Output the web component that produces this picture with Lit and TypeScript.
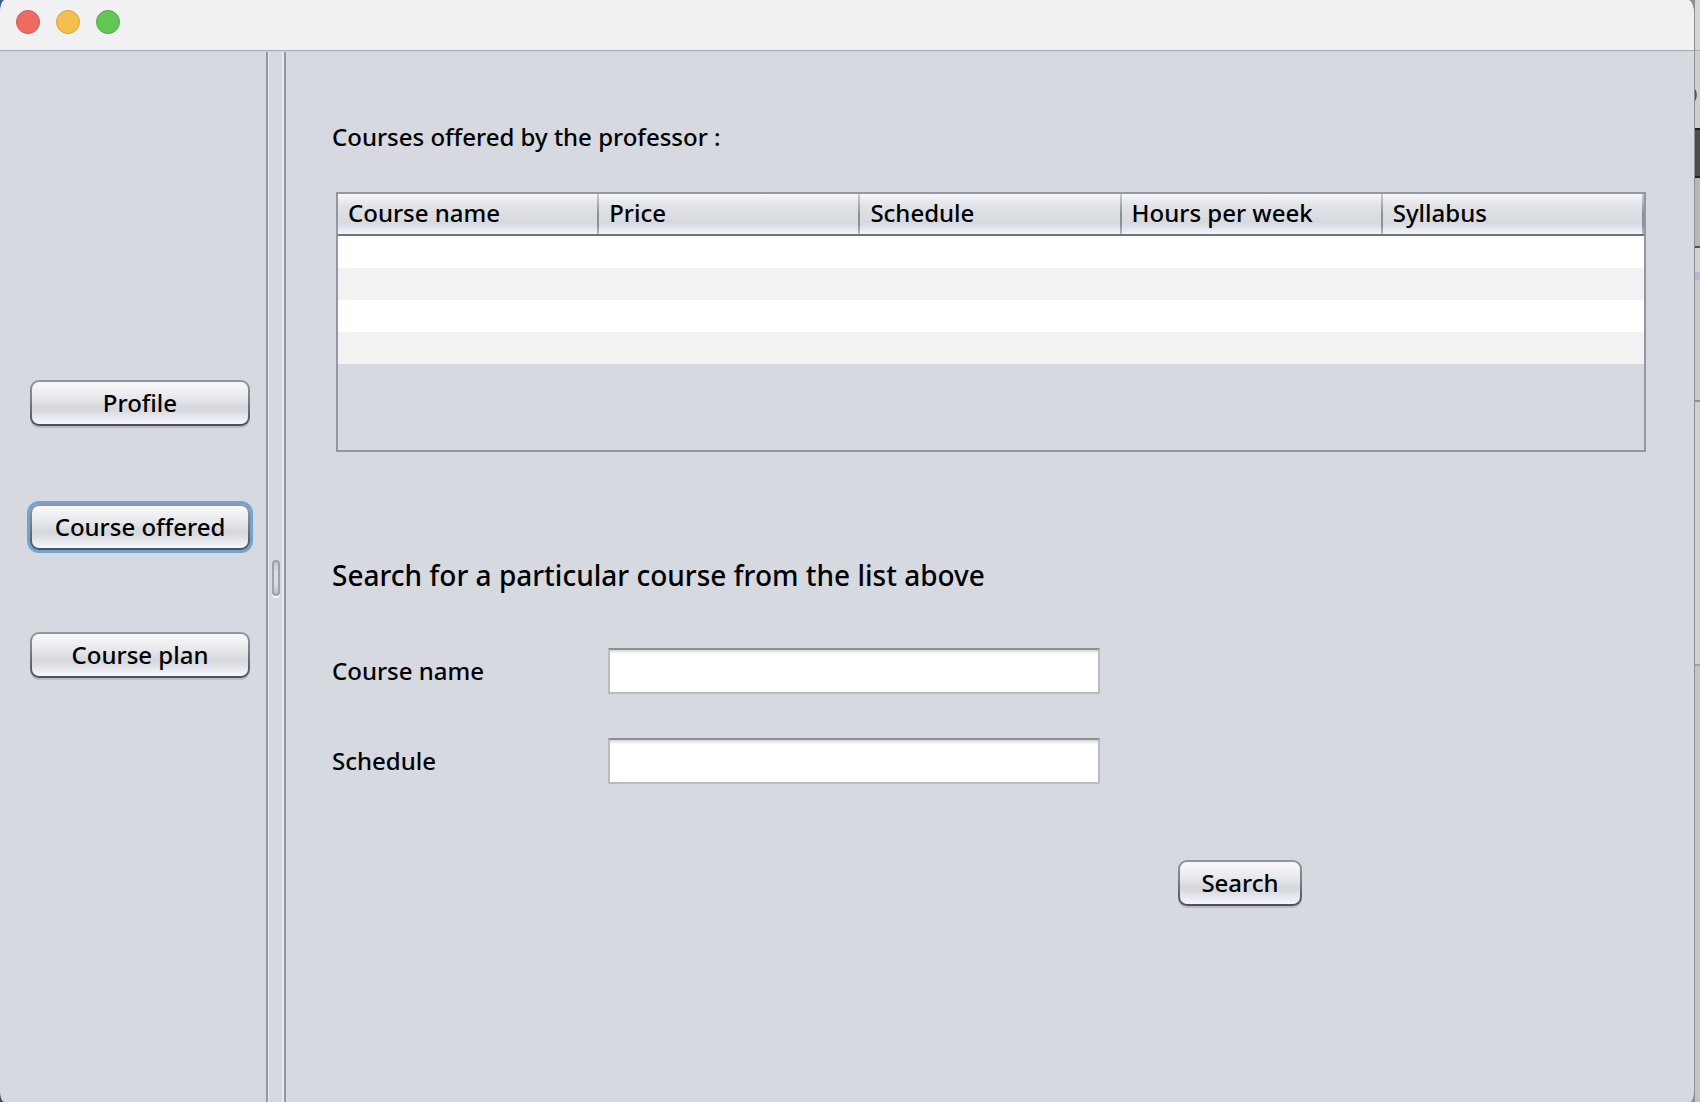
import { LitElement, html, css } from "lit";
import { customElement, state } from "lit/decorators.js";

const COLUMNS = ["Course name", "Price", "Schedule", "Hours per week", "Syllabus"];
const PAGES = ["Profile", "Course offered", "Course plan"];
const EMPTY_ROWS = [0, 1, 2, 3];

@customElement("app-root")
export class AppRoot extends LitElement {
  @state() private page = "Course offered";

  static styles = css`
    :host {
      display: block;
      font-family: "Noto Sans", "Lucida Grande", sans-serif;
      font-size: 24px;
      font-weight: 500;
      line-height: 32px;
      color: #000;
    }
    * {
      box-sizing: border-box;
    }
    .desktop {
      display: grid;
      grid-template-columns: minmax(0, 1fr) 6px;
      min-height: 100vh;
      background: linear-gradient(#3d5a8c 0 50%, #48494c 50%);
    }
    .window {
      display: flex;
      flex-direction: column;
      background: #d6d9df;
      overflow: hidden;
      border-radius: 5px 6px 4px 4px / 13px 14px 11px 11px;
    }
    .behind {
      margin-left: -6px;
      border-left: 6px solid #8f9092;
      z-index: -1;
      background:
        linear-gradient(90deg, #8f9092 1px, transparent 1px),
        radial-gradient(ellipse 3px 7px at 0 95px, #a02a5c 0 80%, transparent),
        linear-gradient(
          #d5d4d8 0 50px, #a9a9ab 50px 51px, #cfcecf 51px 128px,
          #202223 128px 130px, #4b4d4e 130px 176px, #202223 176px 178px,
          #b6b6b5 178px 246px, #505151 246px 248px, #d3d2d1 248px 272px,
          #b8b6d2 272px 280px, #cacac8 280px 400px, #929292 400px 402px,
          #d0d0ce 402px 664px, #a0a0a0 664px 666px, #c4c4c4 666px
        );
    }
    .desktop,
    .window {
      position: relative;
      z-index: 0;
    }
    .titlebar {
      display: flex;
      gap: 16px;
      height: 51px;
      padding: 10px 16px;
      background: #f1f0f3;
      border-bottom: 1px solid #a9abb1;
    }
    .light {
      width: 24px;
      height: 24px;
      padding: 0;
      border-radius: 50%;
      border: 1px solid;
    }
    .close {
      background: #ed6b60;
      border-color: #d4584e;
    }
    .minimise {
      background: #f5bf4f;
      border-color: #d8a13c;
    }
    .zoom {
      background: #62c655;
      border-color: #4fa83d;
    }
    .split {
      flex: 1;
      display: grid;
      grid-template-columns: 266px 20px minmax(0, 1fr);
      border-top: 1px solid #cdd0d6;
    }
    .nav {
      display: grid;
      grid-template-rows: 124px 128px 46px;
      align-items: start;
      padding: 328px 16px 0 30px;
    }
    .divider {
      display: flex;
      justify-content: center;
      border: solid #9297a1;
      border-width: 0 2px;
      box-shadow: inset 1px 0 #e8eaee, inset -2px 0 #e8eaee;
      padding-top: 508px;
    }
    .grip {
      width: 8px;
      height: 36px;
      border: 2px solid #9da2ad;
      border-radius: 4px;
      background: linear-gradient(#c2c6ce, #d9dce2 30%, #d9dce2 70%, #b9bdc6);
      box-shadow: 0 2px #f6f7f9;
    }
    .button {
      height: 46px;
      padding: 0 16px;
      font: inherit;
      color: inherit;
      border: 2px solid transparent;
      border-radius: 9px;
      background:
        linear-gradient(#f9f9fa, #e5e6ea 42%, #d6d9df 58%, #d8dae0 68%, #f6f8fd) padding-box,
        linear-gradient(#92979e, #7d8187 40%, #4c4f55) border-box;
      box-shadow: 0 2px #b9bcc2;
      outline: none;
    }
    .button.current {
      box-shadow: 0 0 0 3px #73a4d1;
    }
    .content {
      padding: 69px 48px 48px 46px;
    }
    .caption,
    .heading {
      margin: 0;
      font-weight: inherit;
      font-size: 24px;
      line-height: 32px;
    }
    .heading {
      font-size: 28px;
      line-height: 40px;
    }
    .viewport {
      min-height: 260px;
      margin: 39px 0 103px 4px;
      border: 2px solid #9297a1;
    }
    .table {
      width: 100%;
      table-layout: fixed;
      border-collapse: separate;
      border-spacing: 0;
    }
    .table th {
      height: 42px;
      padding: 0 10px 2px;
      text-align: left;
      font-weight: inherit;
      border-bottom: 2px solid #6f747f;
      background:
        linear-gradient(#c9cbd0, #8a8f98 50%, #8a8f98 75%, #b5b9c0) right / 2px 100% no-repeat padding-box,
        linear-gradient(#f5f6f9, #e1e3e6 30%, #d6d9df 70%, #d9dce2 76%, #f2f5fb);
    }
    .table td {
      height: 32px;
      padding: 0 10px;
      background: #fff;
    }
    .table tr:nth-child(even) td {
      background: #f2f2f2;
    }
    .form {
      display: grid;
      grid-template-columns: 276px minmax(0, 492px) 78px auto;
      justify-content: start;
      align-items: center;
      row-gap: 44px;
      margin-top: 53px;
    }
    .label {
      grid-column: 1;
    }
    .field {
      grid-column: 2;
      width: 100%;
      height: 46px;
      padding: 0 10px;
      font: inherit;
      color: inherit;
      border: 2px solid #bbbcbf;
      border-top-color: #8e8f92;
      border-radius: 0;
      background: linear-gradient(#d5d6d8, #fff 4px) #fff;
      outline: none;
    }
    .submit {
      grid-column: 4;
      grid-row: 3;
      width: 124px;
      margin-top: 32px;
    }
  `;

  render() {
    return html`
      <div class="desktop">
        <div class="window">
          <header class="titlebar">
            <button class="light close" aria-label="Close"></button>
            <button class="light minimise" aria-label="Minimise"></button>
            <button class="light zoom" aria-label="Zoom"></button>
          </header>
          <div class="split">
            <nav class="nav">
              ${PAGES.map(
                (name) => html`<button
                  class="button ${name === this.page ? "current" : ""}"
                  @click=${() => (this.page = name)}
                >${name}</button>`
              )}
            </nav>
            <div class="divider" role="separator" aria-orientation="vertical">
              <div class="grip"></div>
            </div>
            <main class="content">
              <h2 class="caption" id="caption">Courses offered by the professor :</h2>
              <div class="viewport">
                <table class="table" aria-labelledby="caption">
                  <thead>
                    <tr>${COLUMNS.map((c) => html`<th scope="col">${c}</th>`)}</tr>
                  </thead>
                  <tbody>
                    ${EMPTY_ROWS.map(() => html`<tr>${COLUMNS.map(() => html`<td></td>`)}</tr>`)}
                  </tbody>
                </table>
              </div>
              <h1 class="heading">Search for a particular course from the list above</h1>
              <form class="form" @submit=${(e: Event) => e.preventDefault()}>
                <label class="label" for="course">Course name</label>
                <input class="field" id="course" type="text" />
                <label class="label" for="schedule">Schedule</label>
                <input class="field" id="schedule" type="text" />
                <button class="button submit" type="submit">Search</button>
              </form>
            </main>
          </div>
        </div>
        <div class="behind" aria-hidden="true"></div>
      </div>
    `;
  }
}
